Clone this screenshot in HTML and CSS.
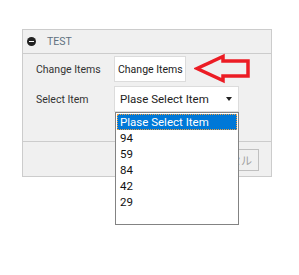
FILE: index.html
```html
<!DOCTYPE html>
<html lang="ja">
<head>
    <meta charset="UTF-8">
    <meta name="viewport" content="width=device-width, initial-scale=1.0">
    <title>TEST</title>
    <link rel="stylesheet" href="styles.css">
</head>
<body>

    <div class="panel">
        <div class="panel-head">
            <span class="toggle"></span>
            <span class="title">TEST</span>
        </div>

        <div class="panel-body">
            <div class="row">
                <label class="label">Change Items</label>
                <input class="text" type="text" value="Change Items">
                <svg class="pointer" width="60" height="32" viewBox="0 0 60 32">
                    <path d="M3,15.5 L29,3.5 L29,8 L54,8 L54,23 L29,23 L29,27.5 Z"
                          fill="none" stroke="#ec1c24" stroke-width="3.5" stroke-linejoin="miter"/>
                </svg>
            </div>

            <div class="row">
                <label class="label">Select Item</label>
                <div class="select">
                    <span>Plase Select Item</span>
                    <span class="caret"></span>
                </div>
            </div>
        </div>

        <div class="panel-foot">
            <button class="btn" disabled>キャンセル</button>
        </div>
    </div>

    <!-- открытый список -->
    <ul class="options">
        <li class="active">Plase Select Item</li>
        <li>94</li>
        <li>59</li>
        <li>84</li>
        <li>42</li>
        <li>29</li>
    </ul>

</body>
</html>
```

FILE: styles.css
```css
/* Base */
html, body {
    height: 100%;
}

body {
    position: relative;
    box-sizing: border-box;
    margin: 0;
    padding: 29px 0 0 22px;
    background: white;
    font-family: Roboto, "Liberation Sans", "Noto Sans CJK JP", sans-serif;
    font-size: 10.5px;
    color: #333;
}

/* Panel */
.panel {
    box-sizing: border-box;
    width: 250px;
    border: 1px solid #cccccc;
    background: #f0f0f0;
}

.panel-head {
    display: flex;
    align-items: center;
    height: 23px;
    padding-left: 4px;
    border-bottom: 1px solid #cccccc;
}

.toggle {
    position: relative;
    width: 9px;
    height: 9px;
    border-radius: 50%;
    background: #222;
    margin-right: 11px;
}

.toggle::after {
    content: "";
    position: absolute;
    left: 2px;
    top: 4px;
    width: 5px;
    height: 1px;
    background: white;
}

.title {
    color: #607080;
}

/* Form rows */
.panel-body {
    padding: 2px 0 29px 13px;
}

.row {
    display: flex;
    align-items: center;
    height: 26px;
    margin-bottom: 4px;
}

.row:last-child {
    margin-bottom: 0;
}

.label {
    width: 78px;
}

.text {
    box-sizing: border-box;
    width: 72px;
    height: 26px;
    margin: 0;
    padding: 0 0 0 3px;
    border: 1px solid #dcdcdc;
    background: white;
    font: inherit;
    color: #222;
    outline: none;
}

.pointer {
    margin: 0 0 0 8px;
    flex-shrink: 0;
}

.select {
    box-sizing: border-box;
    display: flex;
    align-items: center;
    justify-content: space-between;
    width: 125px;
    height: 26px;
    padding: 0 6px 0 5px;
    border: 1px solid #dcdcdc;
    background: white;
    color: #222;
    font-size: 11.5px;
}

.caret {
    width: 0;
    height: 0;
    border-left: 3px solid transparent;
    border-right: 3px solid transparent;
    border-top: 4px solid #222;
}

/* Dropdown list */
.options {
    position: absolute;
    top: 112px;
    left: 115px;
    box-sizing: border-box;
    width: 124px;
    height: 113px;
    margin: 0;
    padding: 1px 1px 0;
    list-style: none;
    border: 1px solid #838383;
    background: white;
}

.options li {
    height: 16px;
    line-height: 16px;
    padding-left: 3px;
    color: #111;
    font-size: 11.5px;
}

.options li.active {
    background: #0078d7;
    color: white;
    outline: 1px dotted #f0a040;
    outline-offset: -1px;
}

/* Footer */
.panel-foot {
    display: flex;
    justify-content: flex-end;
    height: 35px;
    padding: 7px 12px 0 0;
    box-sizing: border-box;
    border-top: 1px solid #cccccc;
}

.btn {
    height: 22px;
    padding: 0 6px;
    border: 1px solid #c0c0c0;
    background: #f0f0f0;
    color: #a0a0a0;
    font-family: "Noto Sans CJK JP", sans-serif;
    font-size: 11px;
}
```
